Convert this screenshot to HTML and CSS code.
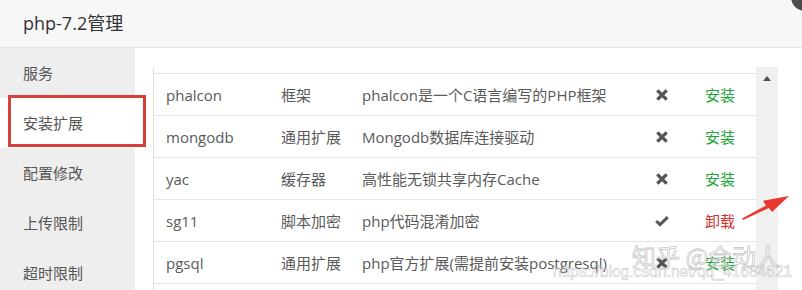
FILE: index.html
```html
<!DOCTYPE html>
<html lang="zh">
<head>
<meta charset="utf-8">
<title>php-7.2管理</title>
<link rel="stylesheet" href="styles.css">
</head>
<body>
<div class="dialog">
  <div class="header">php-7.2管理</div>
  <div class="body">
    <div class="sidebar">
      <div class="nav-item">服务</div>
      <div class="nav-item active">安装扩展</div>
      <div class="nav-item">配置修改</div>
      <div class="nav-item">上传限制</div>
      <div class="nav-item">超时限制</div>
    </div>
    <div class="main">
      <div class="scrollwrap">
        <div class="tablebox">
          <div class="row">
            <span class="c-name">phalcon</span><span class="c-type">框架</span><span class="c-desc">phalcon是一个C语言编写的PHP框架</span>
            <span class="c-ico"><svg class="ico" viewBox="0 0 12 12"><path d="M1.3 1.3L10.7 10.7M10.7 1.3L1.3 10.7"/></svg></span><span class="c-act install">安装</span>
          </div>
          <div class="row">
            <span class="c-name">mongodb</span><span class="c-type">通用扩展</span><span class="c-desc">Mongodb数据库连接驱动</span>
            <span class="c-ico"><svg class="ico" viewBox="0 0 12 12"><path d="M1.3 1.3L10.7 10.7M10.7 1.3L1.3 10.7"/></svg></span><span class="c-act install">安装</span>
          </div>
          <div class="row">
            <span class="c-name">yac</span><span class="c-type">缓存器</span><span class="c-desc">高性能无锁共享内存Cache</span>
            <span class="c-ico"><svg class="ico" viewBox="0 0 12 12"><path d="M1.3 1.3L10.7 10.7M10.7 1.3L1.3 10.7"/></svg></span><span class="c-act install">安装</span>
          </div>
          <div class="row">
            <span class="c-name">sg11</span><span class="c-type">脚本加密</span><span class="c-desc">php代码混淆加密</span>
            <span class="c-ico"><svg class="ico check" viewBox="0 0 14 12"><path d="M1.2 6L5 9.6L12.8 2.2"/></svg></span><span class="c-act uninstall">卸载</span>
          </div>
          <div class="row last">
            <span class="c-name">pgsql</span><span class="c-type">通用扩展</span><span class="c-desc">php官方扩展(需提前安装postgresql)</span>
            <span class="c-ico"><svg class="ico" viewBox="0 0 12 12"><path d="M1.3 1.3L10.7 10.7M10.7 1.3L1.3 10.7"/></svg></span><span class="c-act install">安装</span>
          </div>
        </div>
        <div class="scrollbar"><span class="arrow-up"></span></div>
      </div>
    </div>
  </div>

  <div class="close-btn"></div>
  <div class="mark-box"></div>
  <svg class="mark-arrow" viewBox="0 0 52 26"><polygon points="1,24.5 25,11.5 22,6.8 48,2 31,18 27.8,14 2,26"/></svg>
  <div class="wm-zhihu">知乎 @会动人</div>
  <div class="wm-csdn">https://blog.csdn.net/qq_41684621</div>
</div>
</body>
</html>
```
FILE: styles.css
```css
html, body {
  margin: 0;
  padding: 0;
  background: #fff;
}
.dialog {
  position: relative;
  width: 802px;
  height: 290px;
  overflow: hidden;
  font-family: "Open Sans", "Noto Sans CJK SC", sans-serif;
  color: #555;
}
.header {
  height: 47px;
  line-height: 47px;
  padding-left: 23px;
  font-size: 18px;
  color: #333;
  background: #f7f7f7;
  border-bottom: 1px solid #e6e6e6;
}
.body {
  display: flex;
  height: 242px;
}
.sidebar {
  width: 135px;
  background: #eeeeee;
  flex: none;
}
.nav-item {
  height: 50px;
  line-height: 50px;
  padding-left: 23px;
  font-size: 15px;
  color: #555;
}
.nav-item.active {
  background: #fff;
}
.main {
  flex: 1;
  padding: 19px 0 0 18px;
}
.scrollwrap {
  display: flex;
  height: 100%;
}
.tablebox {
  width: 602px;
  border-left: 1px solid #e2e2e2;
  padding-top: 6px;
}
.row {
  display: grid;
  grid-template-columns: 115px 81px 290px 45px 71px;
  align-items: center;
  height: 41px;
  border-top: 1px solid #e5e5e5;
  font-size: 15px;
  color: #5a5a5a;
  white-space: nowrap;
}
.row.last {
  border-bottom: 1px solid #e5e5e5;
}
.c-name, .c-type, .c-desc {
  padding-left: 12px;
}
.c-ico {
  display: flex;
  justify-content: center;
  padding-right: 1px;
}
.ico {
  width: 12px;
  height: 12px;
  fill: none;
  stroke: #555;
  stroke-width: 3.3;
}
.ico.check {
  width: 14px;
  stroke-width: 3;
}
.c-act {
  text-align: center;
  padding-right: 1px;
}
.install { color: #20a53a; }
.uninstall { color: #d1342e; }
.scrollbar {
  width: 22px;
  background: #f0f0f0;
  position: relative;
}
.arrow-up {
  position: absolute;
  left: 7px;
  top: 9px;
  width: 0;
  height: 0;
  border-left: 4px solid transparent;
  border-right: 4px solid transparent;
  border-bottom: 5px solid #505050;
}
.close-btn {
  position: absolute;
  left: 791px;
  top: -17px;
  width: 28px;
  height: 28px;
  border-radius: 50%;
  background: #4d4d4d;
  box-shadow: 0 0 0 1px #fff;
}
.mark-box {
  position: absolute;
  left: 8px;
  top: 95px;
  width: 132px;
  height: 46px;
  border: 3px solid #d8403c;
}
.mark-arrow {
  position: absolute;
  left: 741px;
  top: 194px;
  width: 52px;
  height: 26px;
  fill: #e9382f;
}
.wm-zhihu {
  position: absolute;
  left: 632px;
  top: 240px;
  font-family: "Noto Sans CJK SC", sans-serif;
  font-size: 24px;
  line-height: 32px;
  color: rgba(255, 255, 255, 0.55);
  -webkit-text-stroke: 0.8px rgba(140, 140, 140, 0.5);
  white-space: nowrap;
}
.wm-csdn {
  position: absolute;
  left: 553px;
  top: 260px;
  font-family: "Liberation Sans", Arial, sans-serif;
  font-size: 15.6px;
  line-height: 24px;
  color: rgba(255, 255, 255, 0.5);
  -webkit-text-stroke: 0.6px rgba(150, 150, 150, 0.5);
  white-space: nowrap;
}
```
